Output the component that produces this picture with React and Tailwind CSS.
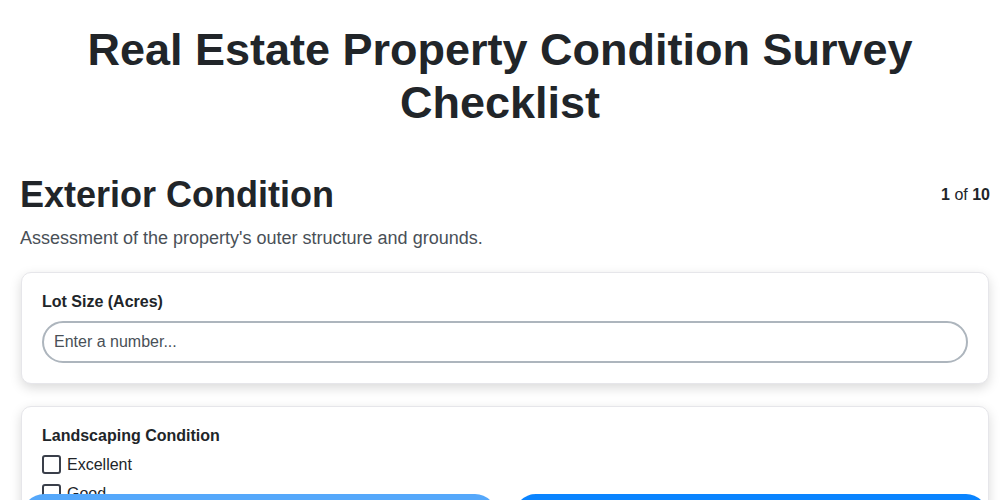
import React from "react";

export default function App() {
  return (
    <div
      className="h-[500px] overflow-hidden bg-white text-[#212529]"
      style={{ fontFamily: '"Liberation Sans", Arial, sans-serif' }}
    >
      <h1 className="px-5 pt-[23px] text-center text-[45px] leading-[53px] font-bold">
        Real Estate Property Condition Survey Checklist
      </h1>
      <div className="pl-5 pr-[10px]">
        <div className="mt-[44px] flex items-center justify-between">
          <h2 className="text-[36px] leading-[1.2] font-bold">Exterior Condition</h2>
          <div className="text-[16px]">
            <span className="font-bold">1</span> of <span className="font-bold">10</span>
          </div>
        </div>
        <p className="mt-[12px] text-[18px] leading-[1.2] text-[#495057]">
          Assessment of the property's outer structure and grounds.
        </p>

        <div className="mt-[22px] mx-[1px] rounded-[10px] border border-[#e6e6ea] bg-white px-5 pt-[19px] pb-5 shadow-[0_4px_12px_rgba(0,0,0,0.15)]">
          <label className="block text-[16px] leading-[1.2] font-bold mb-[10px]">
            Lot Size (Acres)
          </label>
          <input
            type="text"
            placeholder="Enter a number..."
            className="block w-full h-[42px] rounded-full border-2 border-[#adb5bd] px-[10px] text-[16px] text-[#212529] placeholder:text-[#495057] outline-none"
            style={{ fontFamily: '"Liberation Sans", Arial, sans-serif' }}
          />
        </div>

        <div className="mt-[22px] mx-[1px] rounded-[10px] border border-[#e6e6ea] bg-white px-5 pt-[19px] pb-5 shadow-[0_4px_12px_rgba(0,0,0,0.15)]">
          <div className="text-[16px] leading-[1.2] font-bold mb-[5px]">
            Landscaping Condition
          </div>
          {["Excellent", "Good", "Fair", "Poor"].map((o) => (
            <div key={o} className="flex items-center h-[29px] gap-[6px]">
              <span className="w-[19px] h-[19px] rounded-[3px] border-2 border-[#3a3f4a] bg-white"></span>
              <span className="text-[16px]">{o}</span>
            </div>
          ))}
        </div>
      </div>

      <div className="fixed left-[22px] right-[12px] top-[494px] flex gap-[17px]">
        <button className="flex-1 h-[44px] rounded-full bg-[#55a8fb] text-white font-bold text-[16px]">
          Previous
        </button>
        <button className="flex-1 h-[44px] rounded-full bg-[#0a84ff] text-white font-bold text-[16px]">
          Next
        </button>
      </div>
    </div>
  );
}
